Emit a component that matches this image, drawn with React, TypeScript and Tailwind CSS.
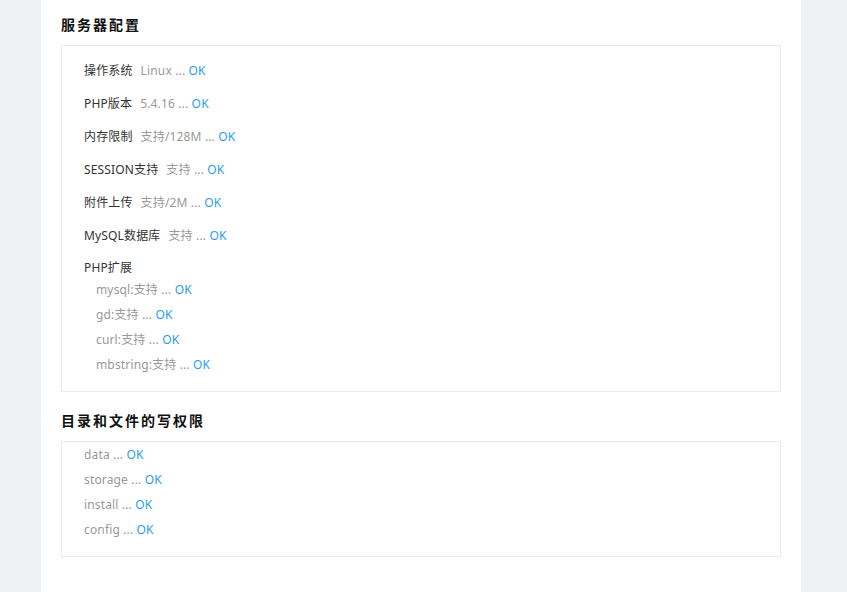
const serverRows = [
  { label: "操作系统", value: "Linux" },
  { label: "PHP版本", value: "5.4.16" },
  { label: "内存限制", value: "支持/128M" },
  { label: "SESSION支持", value: "支持" },
  { label: "附件上传", value: "支持/2M" },
  { label: "MySQL数据库", value: "支持" },
];

const extensions = ["mysql:支持", "gd:支持", "curl:支持", "mbstring:支持"];

const dirs = ["data", "storage", "install", "config"];

function Ok() {
  return <span className="text-[#2d9cf0]">OK</span>;
}

export default function App() {
  return (
    <div
      className="min-h-[592px] bg-[#f0f1f3] text-[12px] tracking-[0.15px]"
      style={{ fontFamily: '"Noto Sans", "Noto Sans CJK SC", sans-serif' }}
    >
      <div className="ml-[41px] w-[760px] min-h-[592px] bg-white px-[20px] pt-[15px]">
        <h2 className="h-[20px] leading-[20px] text-[14px] font-bold tracking-[2px] text-[#111] mb-[10px]">
          服务器配置
        </h2>
        <div className="border border-[#ebebeb] pl-[22px] pt-[12px] pb-[14px]">
          <div className="flex flex-col gap-[8px]">
            {serverRows.map((row) => (
              <div key={row.label} className="h-[25px] leading-[25px]">
                <span className="text-[#333]">{row.label}</span>
                <span className="ml-[8px] text-[#999]">{row.value} ... </span>
                <Ok />
              </div>
            ))}
          </div>
          <div className="mt-[10px] h-[19px] leading-[19px] text-[#333]">PHP扩展</div>
          <div className="pl-[12px]">
            {extensions.map((ext) => (
              <div key={ext} className="h-[25px] leading-[25px] text-[#999]">
                {ext} ... <Ok />
              </div>
            ))}
          </div>
        </div>

        <h2 className="mt-[19px] h-[20px] leading-[20px] text-[14px] font-bold tracking-[2px] text-[#111] mb-[10px]">
          目录和文件的写权限
        </h2>
        <div className="border border-[#ebebeb] pl-[22px] pb-[14px]">
          {dirs.map((d) => (
            <div key={d} className="h-[25px] leading-[25px] text-[#999]">
              {d} ... <Ok />
            </div>
          ))}
        </div>
      </div>
    </div>
  );
}
